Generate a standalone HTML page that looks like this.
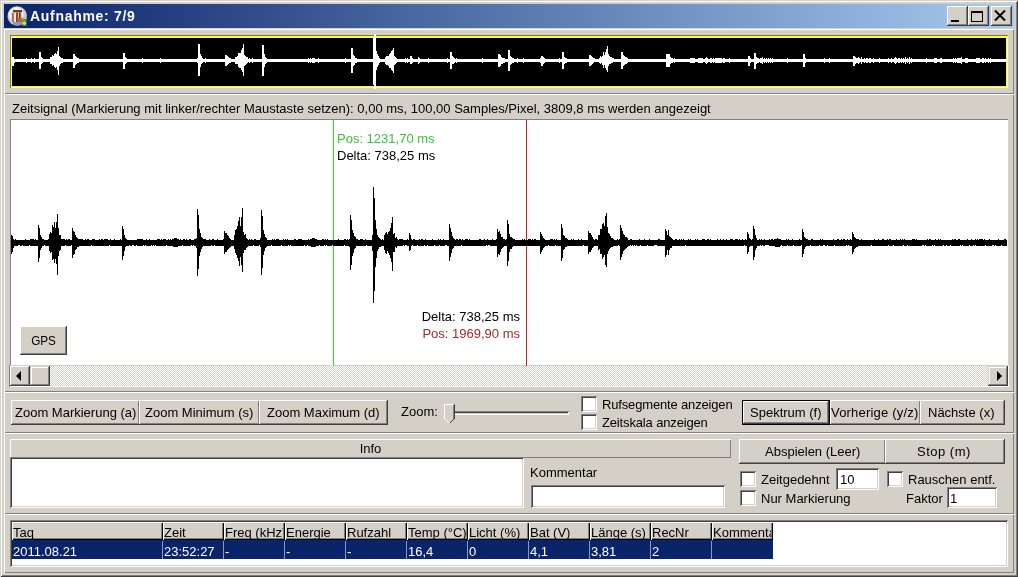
<!DOCTYPE html>
<html><head><meta charset="utf-8"><style>
html,body{margin:0;padding:0;width:1018px;height:577px;overflow:hidden;background:#D4D0C8;}
body>div,body>svg{position:absolute;box-sizing:border-box;}
.t{transform:translateZ(0);font-family:"Liberation Sans",sans-serif;font-size:13px;line-height:15px;white-space:pre;color:#000;}
</style></head><body>
<div style="left:0px;top:0px;width:1018px;height:577px;background:#D4D0C8;box-shadow:inset 1px 1px #D4D0C8,inset -1px -1px #404040,inset 2px 2px #fff,inset -2px -2px #808080;"></div>
<div style="left:4px;top:4px;width:1010px;height:24px;background:linear-gradient(to right,#0A246A,#A6CAF0);"></div>
<svg style="left:6px;top:5px" width="22" height="22" viewBox="0 0 22 22">

<circle cx="11.2" cy="11" r="9.9" fill="#c4ccdc"/><circle cx="10" cy="9.5" r="7.5" fill="#eef1f6"/>
<circle cx="11.2" cy="11" r="9.9" fill="none" stroke="#10204a" stroke-width="0.7" stroke-dasharray="1.2 1"/>
<rect x="5.5" y="7" width="10.5" height="12" fill="#d8c8b8"/>
<rect x="7" y="5" width="9" height="2.2" fill="#7a3a14"/>
<rect x="6" y="8" width="2.2" height="9" fill="#c07048"/>
<rect x="8.2" y="8" width="1.8" height="10" fill="#f8f4f0"/>
<rect x="10.2" y="7.5" width="1.6" height="10" fill="#6a3010"/>
<rect x="13" y="7.5" width="1.6" height="6" fill="#6a3010"/>
<rect x="11.5" y="13" width="5" height="4.5" fill="#d8583a"/>
<rect x="7" y="17" width="9" height="3" fill="#8a9ab8"/>
<rect x="16.3" y="12.5" width="4.2" height="8.3" fill="#4f9a3c"/>
<rect x="16.3" y="12.5" width="4.2" height="1.3" fill="#c8e0c0"/>
<circle cx="18.4" cy="18.3" r="1.7" fill="#e0e040"/>
</svg>
<div class="t" style="left:30px;top:8px;color:#fff;font-weight:bold;font-size:14px;line-height:17px;letter-spacing:0.7px;">Aufnahme: 7/9</div>
<div style="left:947px;top:6px;width:21px;height:20px;background:#D4D0C8;box-shadow:inset -1px -1px #404040,inset 1px 1px #fff,inset -2px -2px #808080;"></div>
<div style="left:968px;top:6px;width:21px;height:20px;background:#D4D0C8;box-shadow:inset -1px -1px #404040,inset 1px 1px #fff,inset -2px -2px #808080;"></div>
<div style="left:991px;top:6px;width:21px;height:20px;background:#D4D0C8;box-shadow:inset -1px -1px #404040,inset 1px 1px #fff,inset -2px -2px #808080;"></div>
<div style="left:951px;top:20px;width:8px;height:2px;background:#000;"></div>
<div style="left:971px;top:11px;width:12px;height:11px;box-shadow:inset 0 0 0 1px #000,inset 0 2px #000;"></div>
<svg style="left:994px;top:10px" width="12" height="11" viewBox="0 0 12 11"><path d="M1 0.5L11 10.5M11 0.5L1 10.5" stroke="#000" stroke-width="2" fill="none"/></svg>
<div style="left:4px;top:29px;width:1010px;height:65px;box-shadow:inset 1px 1px #fff,inset -1px -1px #808080;"></div>
<div style="left:4px;top:94px;width:1010px;height:298px;box-shadow:inset 1px 1px #fff,inset -1px -1px #808080;"></div>
<div style="left:4px;top:392px;width:1010px;height:41px;box-shadow:inset 1px 1px #fff,inset -1px -1px #808080;"></div>
<div style="left:4px;top:433px;width:1010px;height:81px;box-shadow:inset 1px 1px #fff,inset -1px -1px #808080;"></div>
<div style="left:4px;top:514px;width:1010px;height:59px;box-shadow:inset 1px 1px #fff,inset -1px -1px #808080;"></div>
<div style="left:10px;top:35px;width:998px;height:53px;background:#000;box-shadow:inset 1px 1px #7a7a3a,inset -1px -1px #ffffa8,inset 2px 2px #ffff40,inset -2px -2px #f0f060,inset 0 3px #ffff40;"></div>
<svg style="left:0;top:0" width="1018" height="100" shape-rendering="crispEdges"><path fill="#fff" d="M11 59h1V62h-1zM12 57h1V66h-1zM13 57h1V66h-1zM14 59h1V63h-1zM15 59h1V62h-1zM16 59h1V62h-1zM17 59h1V62h-1zM18 59h1V62h-1zM19 59h1V62h-1zM20 59h1V62h-1zM21 59h1V62h-1zM22 59h1V62h-1zM23 59h1V62h-1zM24 59h1V62h-1zM25 59h1V62h-1zM26 58h1V63h-1zM27 59h1V62h-1zM28 59h1V62h-1zM29 59h1V62h-1zM30 59h1V62h-1zM31 58h1V63h-1zM32 59h1V62h-1zM33 59h1V62h-1zM34 58h1V63h-1zM35 59h1V62h-1zM36 59h1V62h-1zM37 59h1V62h-1zM38 59h1V62h-1zM39 52h1V69h-1zM40 52h1V69h-1zM41 57h1V64h-1zM42 58h1V63h-1zM43 59h1V62h-1zM44 59h1V62h-1zM45 59h1V62h-1zM46 59h1V62h-1zM47 59h1V62h-1zM48 59h1V62h-1zM49 59h1V62h-1zM50 57h1V64h-1zM51 57h1V64h-1zM52 55h1V66h-1zM53 56h1V65h-1zM54 54h1V67h-1zM55 53h1V68h-1zM56 54h1V67h-1zM57 51h1V70h-1zM58 47h1V75h-1zM59 56h1V66h-1zM60 57h1V64h-1zM61 58h1V63h-1zM62 58h1V63h-1zM63 59h1V62h-1zM64 59h1V62h-1zM65 59h1V62h-1zM66 59h1V62h-1zM67 59h1V62h-1zM68 59h1V62h-1zM69 59h1V62h-1zM70 59h1V62h-1zM71 59h1V62h-1zM72 59h1V62h-1zM73 54h1V68h-1zM74 54h1V68h-1zM75 56h1V65h-1zM76 57h1V64h-1zM77 58h1V63h-1zM78 58h1V63h-1zM79 59h1V62h-1zM80 59h1V62h-1zM81 59h1V62h-1zM82 59h1V62h-1zM83 59h1V62h-1zM84 59h1V62h-1zM85 59h1V62h-1zM86 59h1V62h-1zM87 59h1V62h-1zM88 59h1V62h-1zM89 59h1V62h-1zM90 59h1V62h-1zM91 59h1V62h-1zM92 59h1V62h-1zM93 59h1V62h-1zM94 59h1V62h-1zM95 59h1V62h-1zM96 59h1V62h-1zM97 59h1V62h-1zM98 59h1V62h-1zM99 59h1V62h-1zM100 59h1V62h-1zM101 59h1V62h-1zM102 59h1V62h-1zM103 59h1V62h-1zM104 59h1V62h-1zM105 59h1V62h-1zM106 59h1V62h-1zM107 59h1V62h-1zM108 59h1V62h-1zM109 59h1V62h-1zM110 59h1V62h-1zM111 59h1V62h-1zM112 59h1V62h-1zM113 59h1V62h-1zM114 59h1V62h-1zM115 59h1V62h-1zM116 59h1V62h-1zM117 59h1V62h-1zM118 59h1V62h-1zM119 59h1V62h-1zM120 59h1V62h-1zM121 59h1V62h-1zM122 59h1V62h-1zM123 53h1V69h-1zM124 53h1V69h-1zM125 57h1V64h-1zM126 58h1V63h-1zM127 59h1V62h-1zM128 59h1V62h-1zM129 59h1V62h-1zM130 59h1V62h-1zM131 59h1V62h-1zM132 59h1V62h-1zM133 59h1V62h-1zM134 59h1V62h-1zM135 59h1V62h-1zM136 59h1V62h-1zM137 59h1V62h-1zM138 59h1V62h-1zM139 59h1V62h-1zM140 59h1V62h-1zM141 59h1V62h-1zM142 58h1V63h-1zM143 59h1V62h-1zM144 59h1V62h-1zM145 59h1V62h-1zM146 59h1V62h-1zM147 59h1V62h-1zM148 59h1V62h-1zM149 59h1V62h-1zM150 59h1V62h-1zM151 59h1V62h-1zM152 59h1V62h-1zM153 59h1V62h-1zM154 59h1V62h-1zM155 59h1V62h-1zM156 59h1V62h-1zM157 59h1V62h-1zM158 59h1V62h-1zM159 59h1V62h-1zM160 58h1V63h-1zM161 59h1V62h-1zM162 59h1V62h-1zM163 59h1V62h-1zM164 59h1V62h-1zM165 59h1V62h-1zM166 59h1V62h-1zM167 59h1V62h-1zM168 59h1V62h-1zM169 59h1V62h-1zM170 59h1V62h-1zM171 59h1V62h-1zM172 59h1V62h-1zM173 59h1V62h-1zM174 59h1V62h-1zM175 59h1V62h-1zM176 59h1V62h-1zM177 59h1V62h-1zM178 59h1V62h-1zM179 59h1V62h-1zM180 59h1V62h-1zM181 59h1V62h-1zM182 59h1V62h-1zM183 59h1V62h-1zM184 59h1V62h-1zM185 59h1V62h-1zM186 59h1V62h-1zM187 59h1V62h-1zM188 59h1V62h-1zM189 59h1V62h-1zM190 59h1V62h-1zM191 59h1V62h-1zM192 59h1V62h-1zM193 59h1V62h-1zM194 59h1V62h-1zM195 59h1V62h-1zM196 59h1V62h-1zM197 58h1V63h-1zM198 44h1V76h-1zM199 44h1V76h-1zM200 54h1V67h-1zM201 56h1V64h-1zM202 58h1V63h-1zM203 59h1V62h-1zM204 59h1V62h-1zM205 58h1V63h-1zM206 59h1V62h-1zM207 59h1V62h-1zM208 59h1V62h-1zM209 59h1V62h-1zM210 59h1V62h-1zM211 59h1V62h-1zM212 59h1V62h-1zM213 59h1V62h-1zM214 59h1V62h-1zM215 59h1V62h-1zM216 59h1V62h-1zM217 59h1V62h-1zM218 59h1V62h-1zM219 59h1V62h-1zM220 59h1V62h-1zM221 59h1V62h-1zM222 59h1V62h-1zM223 59h1V62h-1zM224 59h1V62h-1zM225 55h1V66h-1zM226 55h1V66h-1zM227 56h1V65h-1zM228 57h1V64h-1zM229 58h1V63h-1zM230 58h1V63h-1zM231 59h1V62h-1zM232 59h1V62h-1zM233 59h1V62h-1zM234 59h1V62h-1zM235 57h1V64h-1zM236 57h1V64h-1zM237 56h1V64h-1zM238 53h1V67h-1zM239 53h1V68h-1zM240 53h1V68h-1zM241 50h1V70h-1zM242 48h1V72h-1zM243 44h1V76h-1zM244 55h1V66h-1zM245 56h1V65h-1zM246 57h1V64h-1zM247 57h1V63h-1zM248 59h1V62h-1zM249 58h1V63h-1zM250 59h1V62h-1zM251 59h1V62h-1zM252 58h1V63h-1zM253 59h1V62h-1zM254 59h1V62h-1zM255 59h1V62h-1zM256 59h1V62h-1zM257 59h1V62h-1zM258 59h1V62h-1zM259 59h1V62h-1zM260 59h1V62h-1zM261 59h1V62h-1zM262 45h1V76h-1zM263 45h1V76h-1zM264 54h1V67h-1zM265 57h1V64h-1zM266 58h1V63h-1zM267 59h1V62h-1zM268 59h1V62h-1zM269 59h1V62h-1zM270 59h1V62h-1zM271 59h1V62h-1zM272 59h1V62h-1zM273 59h1V62h-1zM274 59h1V62h-1zM275 59h1V62h-1zM276 59h1V62h-1zM277 59h1V62h-1zM278 59h1V62h-1zM279 59h1V62h-1zM280 59h1V62h-1zM281 59h1V62h-1zM282 59h1V62h-1zM283 59h1V62h-1zM284 59h1V62h-1zM285 59h1V62h-1zM286 59h1V62h-1zM287 59h1V62h-1zM288 59h1V62h-1zM289 59h1V62h-1zM290 59h1V62h-1zM291 59h1V62h-1zM292 59h1V62h-1zM293 59h1V62h-1zM294 59h1V62h-1zM295 59h1V62h-1zM296 59h1V62h-1zM297 59h1V62h-1zM298 59h1V62h-1zM299 59h1V62h-1zM300 59h1V62h-1zM301 59h1V62h-1zM302 59h1V62h-1zM303 59h1V62h-1zM304 59h1V62h-1zM305 59h1V62h-1zM306 59h1V62h-1zM307 59h1V62h-1zM308 58h1V63h-1zM309 59h1V62h-1zM310 58h1V63h-1zM311 59h1V62h-1zM312 58h1V63h-1zM313 58h1V63h-1zM314 58h1V63h-1zM315 59h1V62h-1zM316 59h1V62h-1zM317 59h1V62h-1zM318 58h1V63h-1zM319 59h1V62h-1zM320 59h1V62h-1zM321 59h1V62h-1zM322 59h1V62h-1zM323 59h1V62h-1zM324 59h1V62h-1zM325 59h1V62h-1zM326 59h1V62h-1zM327 59h1V62h-1zM328 59h1V62h-1zM329 59h1V62h-1zM330 59h1V62h-1zM331 59h1V62h-1zM332 59h1V62h-1zM333 59h1V62h-1zM334 59h1V62h-1zM335 59h1V62h-1zM336 59h1V62h-1zM337 59h1V62h-1zM338 59h1V62h-1zM339 59h1V62h-1zM340 59h1V62h-1zM341 59h1V62h-1zM342 59h1V62h-1zM343 59h1V62h-1zM344 59h1V62h-1zM345 58h1V63h-1zM346 59h1V62h-1zM347 59h1V62h-1zM348 59h1V62h-1zM349 59h1V62h-1zM350 59h1V62h-1zM351 48h1V73h-1zM352 48h1V73h-1zM353 55h1V66h-1zM354 56h1V65h-1zM355 58h1V63h-1zM356 58h1V63h-1zM357 59h1V62h-1zM358 59h1V62h-1zM359 59h1V62h-1zM360 59h1V62h-1zM361 59h1V62h-1zM362 59h1V62h-1zM363 59h1V62h-1zM364 59h1V62h-1zM365 59h1V62h-1zM366 59h1V62h-1zM367 59h1V62h-1zM368 59h1V62h-1zM369 59h1V62h-1zM370 59h1V62h-1zM371 59h1V62h-1zM372 59h1V62h-1zM373 59h1V62h-1zM374 34h1V89h-1zM375 34h1V89h-1zM376 51h1V70h-1zM377 54h1V67h-1zM378 56h1V65h-1zM379 58h1V63h-1zM380 59h1V62h-1zM381 59h1V62h-1zM382 59h1V62h-1zM383 59h1V62h-1zM384 59h1V62h-1zM385 57h1V64h-1zM386 56h1V65h-1zM387 56h1V65h-1zM388 56h1V66h-1zM389 54h1V68h-1zM390 53h1V68h-1zM391 51h1V70h-1zM392 50h1V71h-1zM393 48h1V73h-1zM394 56h1V65h-1zM395 57h1V64h-1zM396 58h1V63h-1zM397 59h1V62h-1zM398 59h1V62h-1zM399 59h1V62h-1zM400 59h1V62h-1zM401 59h1V62h-1zM402 59h1V62h-1zM403 59h1V62h-1zM404 59h1V62h-1zM405 58h1V63h-1zM406 59h1V62h-1zM407 58h1V63h-1zM408 59h1V62h-1zM409 59h1V62h-1zM410 56h1V64h-1zM411 56h1V64h-1zM412 58h1V63h-1zM413 59h1V62h-1zM414 59h1V62h-1zM415 59h1V62h-1zM416 59h1V62h-1zM417 59h1V62h-1zM418 57h1V64h-1zM419 58h1V63h-1zM420 59h1V62h-1zM421 59h1V62h-1zM422 59h1V62h-1zM423 59h1V62h-1zM424 59h1V62h-1zM425 59h1V62h-1zM426 59h1V62h-1zM427 59h1V62h-1zM428 58h1V63h-1zM429 59h1V62h-1zM430 59h1V62h-1zM431 59h1V62h-1zM432 59h1V62h-1zM433 59h1V62h-1zM434 59h1V62h-1zM435 59h1V62h-1zM436 59h1V62h-1zM437 59h1V62h-1zM438 59h1V62h-1zM439 59h1V62h-1zM440 59h1V62h-1zM441 59h1V62h-1zM442 59h1V62h-1zM443 59h1V62h-1zM444 59h1V62h-1zM445 59h1V62h-1zM446 59h1V62h-1zM447 58h1V63h-1zM448 59h1V62h-1zM449 59h1V62h-1zM450 52h1V69h-1zM451 52h1V69h-1zM452 56h1V64h-1zM453 57h1V64h-1zM454 58h1V63h-1zM455 59h1V62h-1zM456 58h1V63h-1zM457 59h1V62h-1zM458 59h1V62h-1zM459 59h1V62h-1zM460 59h1V62h-1zM461 59h1V62h-1zM462 59h1V62h-1zM463 59h1V62h-1zM464 59h1V62h-1zM465 59h1V62h-1zM466 59h1V62h-1zM467 59h1V62h-1zM468 59h1V62h-1zM469 59h1V62h-1zM470 59h1V62h-1zM471 59h1V62h-1zM472 59h1V62h-1zM473 59h1V62h-1zM474 59h1V62h-1zM475 59h1V62h-1zM476 59h1V62h-1zM477 59h1V62h-1zM478 59h1V62h-1zM479 59h1V62h-1zM480 59h1V62h-1zM481 59h1V62h-1zM482 58h1V63h-1zM483 59h1V62h-1zM484 59h1V62h-1zM485 59h1V62h-1zM486 59h1V62h-1zM487 59h1V62h-1zM488 59h1V62h-1zM489 59h1V62h-1zM490 59h1V62h-1zM491 59h1V62h-1zM492 59h1V62h-1zM493 59h1V62h-1zM494 59h1V62h-1zM495 59h1V62h-1zM496 59h1V62h-1zM497 59h1V62h-1zM498 54h1V67h-1zM499 54h1V67h-1zM500 55h1V66h-1zM501 57h1V64h-1zM502 58h1V64h-1zM503 58h1V63h-1zM504 58h1V63h-1zM505 59h1V62h-1zM506 59h1V62h-1zM507 59h1V62h-1zM508 50h1V71h-1zM509 50h1V71h-1zM510 56h1V65h-1zM511 57h1V64h-1zM512 58h1V63h-1zM513 58h1V63h-1zM514 59h1V62h-1zM515 59h1V62h-1zM516 59h1V62h-1zM517 58h1V63h-1zM518 59h1V62h-1zM519 59h1V62h-1zM520 59h1V62h-1zM521 59h1V62h-1zM522 59h1V62h-1zM523 58h1V63h-1zM524 59h1V62h-1zM525 59h1V62h-1zM526 59h1V62h-1zM527 59h1V62h-1zM528 59h1V62h-1zM529 59h1V62h-1zM530 59h1V62h-1zM531 59h1V62h-1zM532 59h1V62h-1zM533 59h1V62h-1zM534 59h1V62h-1zM535 59h1V62h-1zM536 59h1V62h-1zM537 59h1V62h-1zM538 59h1V62h-1zM539 59h1V62h-1zM540 58h1V63h-1zM541 56h1V66h-1zM542 56h1V66h-1zM543 57h1V64h-1zM544 58h1V63h-1zM545 59h1V62h-1zM546 59h1V62h-1zM547 59h1V62h-1zM548 59h1V62h-1zM549 59h1V62h-1zM550 59h1V62h-1zM551 59h1V62h-1zM552 59h1V62h-1zM553 59h1V62h-1zM554 59h1V62h-1zM555 59h1V62h-1zM556 59h1V62h-1zM557 59h1V62h-1zM558 59h1V62h-1zM559 58h1V63h-1zM560 59h1V62h-1zM561 59h1V62h-1zM562 52h1V69h-1zM563 52h1V69h-1zM564 57h1V64h-1zM565 58h1V63h-1zM566 58h1V63h-1zM567 59h1V62h-1zM568 59h1V62h-1zM569 59h1V62h-1zM570 59h1V62h-1zM571 59h1V62h-1zM572 59h1V62h-1zM573 59h1V62h-1zM574 59h1V62h-1zM575 59h1V62h-1zM576 59h1V62h-1zM577 59h1V62h-1zM578 59h1V62h-1zM579 59h1V62h-1zM580 59h1V62h-1zM581 59h1V62h-1zM582 59h1V62h-1zM583 59h1V62h-1zM584 59h1V62h-1zM585 59h1V62h-1zM586 59h1V62h-1zM587 59h1V62h-1zM588 59h1V62h-1zM589 55h1V66h-1zM590 55h1V66h-1zM591 56h1V65h-1zM592 57h1V64h-1zM593 58h1V63h-1zM594 58h1V62h-1zM595 59h1V62h-1zM596 59h1V62h-1zM597 59h1V62h-1zM598 59h1V62h-1zM599 58h1V63h-1zM600 56h1V64h-1zM601 57h1V63h-1zM602 56h1V65h-1zM603 52h1V68h-1zM604 55h1V65h-1zM605 52h1V68h-1zM606 49h1V70h-1zM607 46h1V72h-1zM608 54h1V66h-1zM609 56h1V64h-1zM610 57h1V64h-1zM611 57h1V63h-1zM612 58h1V63h-1zM613 58h1V62h-1zM614 59h1V62h-1zM615 59h1V62h-1zM616 59h1V62h-1zM617 59h1V62h-1zM618 59h1V62h-1zM619 59h1V62h-1zM620 59h1V62h-1zM621 52h1V69h-1zM622 52h1V69h-1zM623 55h1V66h-1zM624 56h1V65h-1zM625 57h1V64h-1zM626 57h1V64h-1zM627 58h1V63h-1zM628 59h1V62h-1zM629 59h1V62h-1zM630 59h1V62h-1zM631 59h1V62h-1zM632 59h1V62h-1zM633 59h1V62h-1zM634 59h1V62h-1zM635 59h1V62h-1zM636 59h1V62h-1zM637 59h1V62h-1zM638 59h1V62h-1zM639 59h1V62h-1zM640 59h1V62h-1zM641 59h1V62h-1zM642 59h1V62h-1zM643 59h1V62h-1zM644 59h1V62h-1zM645 59h1V62h-1zM646 59h1V62h-1zM647 59h1V62h-1zM648 59h1V62h-1zM649 59h1V62h-1zM650 59h1V62h-1zM651 59h1V62h-1zM652 59h1V62h-1zM653 59h1V62h-1zM654 59h1V62h-1zM655 59h1V62h-1zM656 59h1V62h-1zM657 59h1V62h-1zM658 59h1V62h-1zM659 59h1V62h-1zM660 59h1V62h-1zM661 59h1V62h-1zM662 59h1V62h-1zM663 59h1V62h-1zM664 59h1V62h-1zM665 59h1V62h-1zM666 54h1V67h-1zM667 54h1V67h-1zM668 54h1V67h-1zM669 54h1V67h-1zM670 57h1V64h-1zM671 58h1V63h-1zM672 58h1V63h-1zM673 59h1V62h-1zM674 58h1V63h-1zM675 59h1V62h-1zM676 59h1V62h-1zM677 59h1V62h-1zM678 59h1V62h-1zM679 59h1V62h-1zM680 59h1V62h-1zM681 59h1V62h-1zM682 59h1V62h-1zM683 59h1V62h-1zM684 59h1V62h-1zM685 59h1V62h-1zM686 59h1V62h-1zM687 59h1V62h-1zM688 59h1V62h-1zM689 59h1V62h-1zM690 58h1V63h-1zM691 58h1V63h-1zM692 58h1V63h-1zM693 58h1V63h-1zM694 58h1V63h-1zM695 59h1V62h-1zM696 59h1V62h-1zM697 59h1V62h-1zM698 58h1V63h-1zM699 58h1V63h-1zM700 58h1V63h-1zM701 58h1V63h-1zM702 58h1V63h-1zM703 59h1V62h-1zM704 59h1V62h-1zM705 58h1V63h-1zM706 57h1V64h-1zM707 58h1V63h-1zM708 59h1V62h-1zM709 59h1V62h-1zM710 58h1V63h-1zM711 58h1V63h-1zM712 59h1V62h-1zM713 58h1V63h-1zM714 59h1V62h-1zM715 58h1V63h-1zM716 58h1V63h-1zM717 58h1V63h-1zM718 58h1V63h-1zM719 58h1V63h-1zM720 58h1V63h-1zM721 58h1V63h-1zM722 59h1V62h-1zM723 58h1V63h-1zM724 58h1V63h-1zM725 59h1V62h-1zM726 59h1V62h-1zM727 59h1V62h-1zM728 59h1V62h-1zM729 58h1V63h-1zM730 59h1V62h-1zM731 59h1V62h-1zM732 59h1V62h-1zM733 59h1V62h-1zM734 59h1V62h-1zM735 59h1V62h-1zM736 59h1V62h-1zM737 59h1V62h-1zM738 59h1V62h-1zM739 59h1V62h-1zM740 59h1V62h-1zM741 59h1V62h-1zM742 59h1V62h-1zM743 59h1V62h-1zM744 59h1V62h-1zM745 59h1V62h-1zM746 59h1V62h-1zM747 59h1V62h-1zM748 56h1V66h-1zM749 56h1V66h-1zM750 58h1V63h-1zM751 59h1V62h-1zM752 59h1V62h-1zM753 59h1V62h-1zM754 53h1V69h-1zM755 53h1V69h-1zM756 57h1V64h-1zM757 58h1V63h-1zM758 58h1V63h-1zM759 59h1V62h-1zM760 58h1V63h-1zM761 58h1V63h-1zM762 57h1V64h-1zM763 59h1V62h-1zM764 58h1V63h-1zM765 59h1V62h-1zM766 58h1V63h-1zM767 59h1V62h-1zM768 58h1V63h-1zM769 59h1V62h-1zM770 58h1V63h-1zM771 59h1V62h-1zM772 58h1V63h-1zM773 59h1V62h-1zM774 59h1V62h-1zM775 59h1V62h-1zM776 59h1V62h-1zM777 59h1V62h-1zM778 59h1V62h-1zM779 59h1V62h-1zM780 59h1V62h-1zM781 59h1V62h-1zM782 59h1V62h-1zM783 59h1V62h-1zM784 59h1V62h-1zM785 59h1V62h-1zM786 59h1V62h-1zM787 58h1V63h-1zM788 59h1V62h-1zM789 59h1V62h-1zM790 59h1V62h-1zM791 59h1V62h-1zM792 59h1V62h-1zM793 59h1V62h-1zM794 59h1V62h-1zM795 59h1V62h-1zM796 59h1V62h-1zM797 59h1V62h-1zM798 59h1V62h-1zM799 59h1V62h-1zM800 59h1V62h-1zM801 59h1V62h-1zM802 59h1V62h-1zM803 54h1V67h-1zM804 54h1V67h-1zM805 58h1V63h-1zM806 59h1V62h-1zM807 59h1V62h-1zM808 59h1V62h-1zM809 59h1V62h-1zM810 59h1V62h-1zM811 59h1V62h-1zM812 59h1V62h-1zM813 59h1V62h-1zM814 59h1V62h-1zM815 59h1V62h-1zM816 59h1V62h-1zM817 59h1V62h-1zM818 59h1V62h-1zM819 59h1V62h-1zM820 59h1V62h-1zM821 59h1V62h-1zM822 59h1V62h-1zM823 59h1V62h-1zM824 58h1V63h-1zM825 59h1V62h-1zM826 59h1V62h-1zM827 59h1V62h-1zM828 59h1V62h-1zM829 58h1V63h-1zM830 59h1V62h-1zM831 59h1V62h-1zM832 59h1V62h-1zM833 59h1V62h-1zM834 59h1V62h-1zM835 59h1V62h-1zM836 59h1V62h-1zM837 59h1V62h-1zM838 59h1V62h-1zM839 59h1V62h-1zM840 59h1V62h-1zM841 59h1V62h-1zM842 59h1V62h-1zM843 59h1V62h-1zM844 59h1V62h-1zM845 59h1V62h-1zM846 59h1V62h-1zM847 59h1V62h-1zM848 59h1V62h-1zM849 59h1V62h-1zM850 59h1V62h-1zM851 59h1V62h-1zM852 59h1V62h-1zM853 56h1V66h-1zM854 56h1V66h-1zM855 57h1V64h-1zM856 58h1V63h-1zM857 58h1V63h-1zM858 57h1V64h-1zM859 58h1V63h-1zM860 59h1V62h-1zM861 57h1V64h-1zM862 59h1V62h-1zM863 59h1V62h-1zM864 58h1V63h-1zM865 59h1V62h-1zM866 58h1V63h-1zM867 58h1V63h-1zM868 59h1V62h-1zM869 58h1V63h-1zM870 58h1V63h-1zM871 59h1V62h-1zM872 59h1V62h-1zM873 58h1V63h-1zM874 59h1V62h-1zM875 59h1V62h-1zM876 59h1V62h-1zM877 59h1V62h-1zM878 59h1V62h-1zM879 58h1V63h-1zM880 59h1V62h-1zM881 59h1V62h-1zM882 59h1V62h-1zM883 59h1V62h-1zM884 59h1V62h-1zM885 59h1V62h-1zM886 59h1V62h-1zM887 59h1V62h-1zM888 58h1V63h-1zM889 59h1V62h-1zM890 59h1V62h-1zM891 58h1V63h-1zM892 59h1V62h-1zM893 59h1V62h-1zM894 58h1V63h-1zM895 57h1V64h-1zM896 58h1V63h-1zM897 59h1V62h-1zM898 58h1V63h-1zM899 58h1V63h-1zM900 59h1V62h-1zM901 58h1V63h-1zM902 59h1V62h-1zM903 58h1V63h-1zM904 59h1V62h-1zM905 57h1V64h-1zM906 59h1V62h-1zM907 58h1V63h-1zM908 59h1V62h-1zM909 57h1V64h-1zM910 59h1V62h-1zM911 58h1V63h-1zM912 59h1V62h-1zM913 59h1V62h-1zM914 59h1V62h-1zM915 59h1V62h-1zM916 59h1V62h-1zM917 59h1V62h-1zM918 59h1V62h-1zM919 59h1V62h-1zM920 59h1V62h-1zM921 59h1V62h-1zM922 59h1V62h-1zM923 59h1V62h-1zM924 59h1V62h-1zM925 59h1V62h-1zM926 58h1V63h-1zM927 59h1V62h-1zM928 59h1V62h-1zM929 59h1V62h-1zM930 59h1V62h-1zM931 59h1V62h-1zM932 59h1V62h-1zM933 59h1V62h-1zM934 58h1V63h-1zM935 58h1V63h-1zM936 58h1V63h-1zM937 59h1V62h-1zM938 59h1V62h-1zM939 59h1V62h-1zM940 58h1V63h-1zM941 58h1V63h-1zM942 59h1V62h-1zM943 59h1V62h-1zM944 59h1V62h-1zM945 59h1V62h-1zM946 59h1V62h-1zM947 59h1V62h-1zM948 59h1V62h-1zM949 59h1V62h-1zM950 59h1V62h-1zM951 59h1V62h-1zM952 59h1V62h-1zM953 58h1V63h-1zM954 59h1V62h-1zM955 58h1V63h-1zM956 59h1V62h-1zM957 58h1V63h-1zM958 58h1V63h-1zM959 58h1V63h-1zM960 58h1V63h-1zM961 57h1V64h-1zM962 59h1V62h-1zM963 59h1V62h-1zM964 59h1V62h-1zM965 58h1V63h-1zM966 58h1V63h-1zM967 58h1V63h-1zM968 59h1V62h-1zM969 59h1V62h-1zM970 59h1V62h-1zM971 59h1V62h-1zM972 59h1V62h-1zM973 59h1V62h-1zM974 59h1V62h-1zM975 59h1V62h-1zM976 58h1V63h-1zM977 58h1V63h-1zM978 58h1V63h-1zM979 58h1V63h-1zM980 59h1V62h-1zM981 59h1V62h-1zM982 58h1V63h-1zM983 58h1V63h-1zM984 59h1V62h-1zM985 58h1V63h-1zM986 59h1V62h-1zM987 59h1V62h-1zM988 58h1V63h-1zM989 59h1V62h-1zM990 58h1V63h-1zM991 59h1V62h-1zM992 59h1V62h-1zM993 59h1V62h-1zM994 59h1V62h-1zM995 59h1V62h-1zM996 59h1V62h-1zM997 59h1V62h-1zM998 59h1V62h-1zM999 59h1V62h-1zM1000 59h1V62h-1zM1001 59h1V62h-1zM1002 59h1V62h-1zM1003 59h1V62h-1zM1004 59h1V62h-1zM1005 59h1V62h-1zM1006 59h1V62h-1z"/><rect x="373" y="38" width="3" height="47" fill="#fff"/></svg>
<div class="t" style="left:12px;top:101px;color:#000;">Zeitsignal (Markierung mit linker/rechter Maustaste setzen): 0,00 ms, 100,00 Samples/Pixel, 3809,8 ms werden angezeigt</div>
<div style="left:10px;top:119px;width:998px;height:247px;background:#fff;box-shadow:inset 1px 1px #808080,inset -1px 0 #fff;"></div>
<div style="left:9px;top:365px;width:1000px;height:22px;background:#D4D0C8;box-shadow:inset 1px 0 #808080,inset -1px -1px #fff;"></div>
<svg style="left:0;top:0" width="1018" height="400" shape-rendering="crispEdges"><rect x="331" y="120" width="1" height="246" fill="#F2FFF2"/><rect x="332" y="120" width="1" height="246" fill="#D4FFD4"/><rect x="333" y="120" width="1" height="246" fill="#5ABE5A"/><rect x="527" y="120" width="2" height="246" fill="#FFF2F2"/><rect x="526" y="120" width="1" height="246" fill="#993333"/><path fill="#000" d="M11 235h1V254h-1zM12 236h1V252h-1zM13 239h1V248h-1zM14 240h1V246h-1zM15 239h1V246h-1zM16 240h1V246h-1zM17 240h1V246h-1zM18 240h1V245h-1zM19 240h1V245h-1zM20 240h1V246h-1zM21 240h1V246h-1zM22 240h1V245h-1zM23 240h1V246h-1zM24 240h1V246h-1zM25 239h1V246h-1zM26 240h1V246h-1zM27 240h1V246h-1zM28 240h1V246h-1zM29 240h1V245h-1zM30 239h1V246h-1zM31 239h1V246h-1zM32 239h1V246h-1zM33 239h1V246h-1zM34 240h1V246h-1zM35 239h1V246h-1zM36 240h1V246h-1zM37 240h1V246h-1zM38 225h1V262h-1zM39 228h1V258h-1zM40 235h1V250h-1zM41 237h1V248h-1zM42 239h1V246h-1zM43 239h1V246h-1zM44 240h1V245h-1zM45 240h1V246h-1zM46 240h1V246h-1zM47 240h1V246h-1zM48 239h1V246h-1zM49 234h1V251h-1zM50 232h1V253h-1zM51 233h1V252h-1zM52 225h1V260h-1zM53 227h1V259h-1zM54 222h1V263h-1zM55 228h1V259h-1zM56 222h1V264h-1zM57 214h1V275h-1zM58 228h1V256h-1zM59 235h1V251h-1zM60 235h1V250h-1zM61 239h1V246h-1zM62 239h1V246h-1zM63 239h1V246h-1zM64 239h1V246h-1zM65 240h1V245h-1zM66 239h1V246h-1zM67 240h1V246h-1zM68 239h1V246h-1zM69 239h1V246h-1zM70 240h1V246h-1zM71 240h1V245h-1zM72 228h1V258h-1zM73 231h1V255h-1zM74 232h1V254h-1zM75 235h1V250h-1zM76 237h1V249h-1zM77 238h1V247h-1zM78 239h1V247h-1zM79 239h1V246h-1zM80 239h1V246h-1zM81 239h1V246h-1zM82 239h1V246h-1zM83 240h1V246h-1zM84 240h1V246h-1zM85 239h1V246h-1zM86 240h1V246h-1zM87 239h1V246h-1zM88 239h1V246h-1zM89 240h1V246h-1zM90 240h1V246h-1zM91 240h1V245h-1zM92 239h1V246h-1zM93 239h1V246h-1zM94 239h1V246h-1zM95 240h1V246h-1zM96 240h1V246h-1zM97 240h1V246h-1zM98 240h1V246h-1zM99 239h1V246h-1zM100 240h1V246h-1zM101 239h1V246h-1zM102 239h1V246h-1zM103 240h1V246h-1zM104 239h1V246h-1zM105 239h1V246h-1zM106 239h1V246h-1zM107 239h1V246h-1zM108 240h1V246h-1zM109 240h1V245h-1zM110 239h1V246h-1zM111 240h1V246h-1zM112 240h1V246h-1zM113 240h1V246h-1zM114 239h1V246h-1zM115 240h1V246h-1zM116 240h1V246h-1zM117 240h1V246h-1zM118 240h1V246h-1zM119 240h1V246h-1zM120 239h1V246h-1zM121 240h1V246h-1zM122 226h1V260h-1zM123 229h1V256h-1zM124 235h1V251h-1zM125 238h1V247h-1zM126 239h1V246h-1zM127 240h1V246h-1zM128 240h1V246h-1zM129 240h1V245h-1zM130 240h1V246h-1zM131 240h1V246h-1zM132 240h1V245h-1zM133 240h1V245h-1zM134 240h1V246h-1zM135 240h1V246h-1zM136 240h1V245h-1zM137 239h1V246h-1zM138 239h1V246h-1zM139 239h1V246h-1zM140 239h1V246h-1zM141 239h1V246h-1zM142 239h1V246h-1zM143 240h1V245h-1zM144 240h1V246h-1zM145 240h1V245h-1zM146 239h1V246h-1zM147 240h1V246h-1zM148 240h1V246h-1zM149 239h1V246h-1zM150 240h1V246h-1zM151 240h1V245h-1zM152 240h1V246h-1zM153 240h1V245h-1zM154 240h1V246h-1zM155 240h1V245h-1zM156 240h1V246h-1zM157 239h1V246h-1zM158 239h1V246h-1zM159 239h1V246h-1zM160 240h1V246h-1zM161 239h1V246h-1zM162 240h1V246h-1zM163 239h1V246h-1zM164 239h1V246h-1zM165 239h1V246h-1zM166 240h1V245h-1zM167 240h1V246h-1zM168 239h1V246h-1zM169 240h1V246h-1zM170 239h1V246h-1zM171 240h1V246h-1zM172 239h1V246h-1zM173 239h1V247h-1zM174 238h1V247h-1zM175 238h1V247h-1zM176 238h1V247h-1zM177 239h1V247h-1zM178 239h1V246h-1zM179 240h1V246h-1zM180 239h1V246h-1zM181 240h1V246h-1zM182 240h1V245h-1zM183 239h1V246h-1zM184 239h1V246h-1zM185 240h1V246h-1zM186 239h1V246h-1zM187 240h1V246h-1zM188 240h1V246h-1zM189 239h1V246h-1zM190 239h1V246h-1zM191 240h1V245h-1zM192 240h1V246h-1zM193 240h1V245h-1zM194 239h1V246h-1zM195 239h1V246h-1zM196 238h1V248h-1zM197 209h1V276h-1zM198 215h1V269h-1zM199 229h1V256h-1zM200 233h1V252h-1zM201 237h1V249h-1zM202 238h1V247h-1zM203 239h1V246h-1zM204 239h1V246h-1zM205 239h1V246h-1zM206 240h1V246h-1zM207 240h1V246h-1zM208 240h1V246h-1zM209 239h1V246h-1zM210 240h1V246h-1zM211 240h1V245h-1zM212 239h1V246h-1zM213 239h1V246h-1zM214 240h1V245h-1zM215 240h1V246h-1zM216 240h1V246h-1zM217 239h1V246h-1zM218 240h1V246h-1zM219 240h1V246h-1zM220 240h1V246h-1zM221 240h1V246h-1zM222 240h1V246h-1zM223 239h1V246h-1zM224 231h1V254h-1zM225 233h1V252h-1zM226 233h1V252h-1zM227 235h1V250h-1zM228 236h1V249h-1zM229 238h1V248h-1zM230 239h1V247h-1zM231 240h1V246h-1zM232 240h1V246h-1zM233 240h1V246h-1zM234 235h1V249h-1zM235 230h1V253h-1zM236 229h1V255h-1zM237 226h1V258h-1zM238 221h1V261h-1zM239 217h1V266h-1zM240 226h1V257h-1zM241 217h1V265h-1zM242 208h1V272h-1zM243 232h1V253h-1zM244 235h1V250h-1zM245 234h1V250h-1zM246 238h1V248h-1zM247 239h1V247h-1zM248 240h1V246h-1zM249 239h1V246h-1zM250 240h1V246h-1zM251 239h1V246h-1zM252 240h1V246h-1zM253 240h1V245h-1zM254 239h1V246h-1zM255 239h1V246h-1zM256 240h1V246h-1zM257 240h1V246h-1zM258 240h1V246h-1zM259 240h1V245h-1zM260 238h1V247h-1zM261 210h1V275h-1zM262 216h1V268h-1zM263 230h1V255h-1zM264 234h1V251h-1zM265 237h1V248h-1zM266 238h1V247h-1zM267 240h1V246h-1zM268 240h1V246h-1zM269 240h1V246h-1zM270 240h1V246h-1zM271 240h1V245h-1zM272 239h1V246h-1zM273 240h1V246h-1zM274 239h1V246h-1zM275 240h1V246h-1zM276 239h1V246h-1zM277 239h1V246h-1zM278 239h1V246h-1zM279 240h1V246h-1zM280 240h1V246h-1zM281 240h1V245h-1zM282 240h1V246h-1zM283 239h1V246h-1zM284 240h1V246h-1zM285 239h1V246h-1zM286 240h1V246h-1zM287 239h1V246h-1zM288 240h1V245h-1zM289 240h1V246h-1zM290 240h1V245h-1zM291 240h1V246h-1zM292 240h1V246h-1zM293 240h1V246h-1zM294 239h1V246h-1zM295 239h1V246h-1zM296 240h1V246h-1zM297 240h1V246h-1zM298 239h1V246h-1zM299 239h1V246h-1zM300 239h1V246h-1zM301 239h1V246h-1zM302 240h1V246h-1zM303 240h1V246h-1zM304 240h1V245h-1zM305 240h1V246h-1zM306 240h1V246h-1zM307 240h1V245h-1zM308 239h1V246h-1zM309 240h1V246h-1zM310 239h1V246h-1zM311 239h1V247h-1zM312 238h1V247h-1zM313 238h1V247h-1zM314 238h1V247h-1zM315 239h1V247h-1zM316 239h1V246h-1zM317 240h1V246h-1zM318 240h1V246h-1zM319 240h1V245h-1zM320 240h1V246h-1zM321 240h1V246h-1zM322 239h1V246h-1zM323 239h1V246h-1zM324 240h1V245h-1zM325 239h1V246h-1zM326 240h1V245h-1zM327 239h1V246h-1zM328 240h1V246h-1zM329 240h1V246h-1zM330 240h1V246h-1zM331 240h1V246h-1zM332 240h1V245h-1zM333 240h1V246h-1zM334 240h1V246h-1zM335 240h1V246h-1zM336 240h1V246h-1zM337 240h1V246h-1zM338 239h1V246h-1zM339 240h1V246h-1zM340 240h1V246h-1zM341 240h1V246h-1zM342 240h1V246h-1zM343 240h1V246h-1zM344 239h1V245h-1zM345 239h1V246h-1zM346 240h1V246h-1zM347 239h1V246h-1zM348 240h1V246h-1zM349 239h1V247h-1zM350 215h1V270h-1zM351 220h1V265h-1zM352 230h1V256h-1zM353 233h1V253h-1zM354 236h1V249h-1zM355 237h1V248h-1zM356 239h1V246h-1zM357 239h1V246h-1zM358 240h1V246h-1zM359 240h1V246h-1zM360 239h1V246h-1zM361 239h1V246h-1zM362 239h1V246h-1zM363 240h1V246h-1zM364 240h1V246h-1zM365 239h1V246h-1zM366 240h1V245h-1zM367 240h1V246h-1zM368 240h1V246h-1zM369 240h1V246h-1zM370 240h1V246h-1zM371 240h1V246h-1zM372 235h1V251h-1zM373 187h1V303h-1zM374 198h1V291h-1zM375 220h1V267h-1zM376 229h1V258h-1zM377 235h1V251h-1zM378 237h1V249h-1zM379 238h1V247h-1zM380 239h1V247h-1zM381 240h1V246h-1zM382 239h1V246h-1zM383 240h1V246h-1zM384 235h1V250h-1zM385 233h1V253h-1zM386 232h1V254h-1zM387 234h1V251h-1zM388 232h1V253h-1zM389 231h1V255h-1zM390 228h1V258h-1zM391 223h1V262h-1zM392 217h1V271h-1zM393 234h1V252h-1zM394 233h1V252h-1zM395 238h1V247h-1zM396 237h1V248h-1zM397 239h1V246h-1zM398 240h1V246h-1zM399 239h1V246h-1zM400 239h1V246h-1zM401 239h1V246h-1zM402 239h1V246h-1zM403 240h1V245h-1zM404 240h1V246h-1zM405 240h1V245h-1zM406 240h1V245h-1zM407 239h1V246h-1zM408 240h1V246h-1zM409 233h1V251h-1zM410 235h1V250h-1zM411 239h1V246h-1zM412 240h1V245h-1zM413 239h1V246h-1zM414 239h1V246h-1zM415 240h1V246h-1zM416 240h1V246h-1zM417 240h1V245h-1zM418 240h1V246h-1zM419 239h1V246h-1zM420 240h1V246h-1zM421 239h1V246h-1zM422 239h1V246h-1zM423 240h1V246h-1zM424 240h1V245h-1zM425 239h1V246h-1zM426 240h1V246h-1zM427 240h1V245h-1zM428 240h1V246h-1zM429 240h1V246h-1zM430 240h1V246h-1zM431 240h1V246h-1zM432 239h1V246h-1zM433 240h1V246h-1zM434 240h1V245h-1zM435 240h1V246h-1zM436 240h1V246h-1zM437 240h1V246h-1zM438 239h1V246h-1zM439 240h1V245h-1zM440 239h1V246h-1zM441 240h1V246h-1zM442 240h1V246h-1zM443 239h1V246h-1zM444 240h1V246h-1zM445 240h1V245h-1zM446 240h1V245h-1zM447 240h1V246h-1zM448 240h1V246h-1zM449 224h1V261h-1zM450 228h1V257h-1zM451 232h1V253h-1zM452 236h1V249h-1zM453 238h1V248h-1zM454 239h1V246h-1zM455 240h1V246h-1zM456 239h1V246h-1zM457 239h1V246h-1zM458 240h1V246h-1zM459 239h1V246h-1zM460 239h1V246h-1zM461 240h1V245h-1zM462 239h1V246h-1zM463 240h1V246h-1zM464 240h1V246h-1zM465 239h1V246h-1zM466 239h1V246h-1zM467 239h1V246h-1zM468 240h1V246h-1zM469 239h1V246h-1zM470 240h1V246h-1zM471 240h1V246h-1zM472 240h1V246h-1zM473 240h1V246h-1zM474 240h1V246h-1zM475 240h1V246h-1zM476 240h1V246h-1zM477 240h1V246h-1zM478 240h1V246h-1zM479 239h1V246h-1zM480 239h1V246h-1zM481 240h1V246h-1zM482 240h1V246h-1zM483 240h1V246h-1zM484 239h1V246h-1zM485 240h1V246h-1zM486 240h1V245h-1zM487 239h1V246h-1zM488 240h1V245h-1zM489 240h1V245h-1zM490 240h1V246h-1zM491 240h1V246h-1zM492 239h1V246h-1zM493 240h1V246h-1zM494 240h1V246h-1zM495 240h1V246h-1zM496 239h1V246h-1zM497 229h1V257h-1zM498 232h1V254h-1zM499 231h1V255h-1zM500 234h1V252h-1zM501 237h1V249h-1zM502 237h1V248h-1zM503 239h1V247h-1zM504 239h1V246h-1zM505 240h1V246h-1zM506 239h1V246h-1zM507 220h1V266h-1zM508 224h1V261h-1zM509 234h1V252h-1zM510 237h1V249h-1zM511 237h1V249h-1zM512 238h1V247h-1zM513 239h1V246h-1zM514 239h1V246h-1zM515 240h1V246h-1zM516 240h1V246h-1zM517 240h1V246h-1zM518 240h1V246h-1zM519 240h1V246h-1zM520 240h1V246h-1zM521 240h1V246h-1zM522 239h1V246h-1zM523 240h1V246h-1zM524 239h1V246h-1zM525 240h1V246h-1zM526 240h1V246h-1zM527 240h1V246h-1zM528 239h1V246h-1zM529 239h1V246h-1zM530 239h1V246h-1zM531 240h1V246h-1zM532 239h1V246h-1zM533 240h1V246h-1zM534 239h1V246h-1zM535 239h1V246h-1zM536 240h1V246h-1zM537 240h1V246h-1zM538 240h1V246h-1zM539 240h1V246h-1zM540 232h1V254h-1zM541 234h1V252h-1zM542 236h1V250h-1zM543 238h1V248h-1zM544 239h1V247h-1zM545 240h1V246h-1zM546 240h1V246h-1zM547 240h1V246h-1zM548 240h1V245h-1zM549 240h1V246h-1zM550 239h1V246h-1zM551 239h1V246h-1zM552 239h1V246h-1zM553 240h1V246h-1zM554 239h1V246h-1zM555 240h1V245h-1zM556 239h1V246h-1zM557 240h1V246h-1zM558 240h1V246h-1zM559 240h1V246h-1zM560 240h1V246h-1zM561 224h1V261h-1zM562 228h1V258h-1zM563 235h1V250h-1zM564 236h1V249h-1zM565 238h1V247h-1zM566 238h1V247h-1zM567 239h1V246h-1zM568 240h1V246h-1zM569 240h1V246h-1zM570 240h1V246h-1zM571 239h1V246h-1zM572 240h1V246h-1zM573 239h1V246h-1zM574 240h1V246h-1zM575 240h1V246h-1zM576 240h1V246h-1zM577 240h1V246h-1zM578 239h1V246h-1zM579 240h1V246h-1zM580 240h1V246h-1zM581 239h1V246h-1zM582 240h1V246h-1zM583 240h1V245h-1zM584 240h1V246h-1zM585 240h1V246h-1zM586 240h1V246h-1zM587 240h1V246h-1zM588 231h1V254h-1zM589 233h1V252h-1zM590 233h1V252h-1zM591 235h1V250h-1zM592 237h1V248h-1zM593 239h1V247h-1zM594 240h1V246h-1zM595 239h1V246h-1zM596 239h1V246h-1zM597 240h1V246h-1zM598 235h1V250h-1zM599 235h1V249h-1zM600 229h1V254h-1zM601 229h1V254h-1zM602 224h1V259h-1zM603 223h1V257h-1zM604 226h1V255h-1zM605 216h1V265h-1zM606 213h1V267h-1zM607 227h1V254h-1zM608 233h1V251h-1zM609 234h1V249h-1zM610 236h1V248h-1zM611 238h1V247h-1zM612 238h1V247h-1zM613 239h1V246h-1zM614 240h1V246h-1zM615 240h1V246h-1zM616 240h1V246h-1zM617 239h1V246h-1zM618 240h1V245h-1zM619 239h1V246h-1zM620 225h1V260h-1zM621 228h1V257h-1zM622 231h1V254h-1zM623 234h1V251h-1zM624 235h1V250h-1zM625 237h1V249h-1zM626 237h1V248h-1zM627 238h1V247h-1zM628 240h1V246h-1zM629 240h1V246h-1zM630 239h1V245h-1zM631 239h1V246h-1zM632 240h1V245h-1zM633 240h1V246h-1zM634 240h1V245h-1zM635 240h1V246h-1zM636 240h1V245h-1zM637 240h1V246h-1zM638 240h1V246h-1zM639 239h1V246h-1zM640 240h1V245h-1zM641 240h1V246h-1zM642 240h1V246h-1zM643 240h1V246h-1zM644 239h1V246h-1zM645 240h1V246h-1zM646 240h1V246h-1zM647 240h1V245h-1zM648 240h1V246h-1zM649 239h1V246h-1zM650 240h1V246h-1zM651 240h1V246h-1zM652 240h1V246h-1zM653 240h1V246h-1zM654 240h1V245h-1zM655 240h1V245h-1zM656 240h1V245h-1zM657 240h1V246h-1zM658 239h1V246h-1zM659 239h1V246h-1zM660 240h1V246h-1zM661 240h1V246h-1zM662 240h1V246h-1zM663 240h1V246h-1zM664 240h1V246h-1zM665 229h1V257h-1zM666 231h1V255h-1zM667 235h1V250h-1zM668 230h1V255h-1zM669 236h1V250h-1zM670 237h1V248h-1zM671 238h1V248h-1zM672 239h1V246h-1zM673 240h1V246h-1zM674 240h1V246h-1zM675 239h1V246h-1zM676 239h1V246h-1zM677 240h1V246h-1zM678 240h1V246h-1zM679 239h1V246h-1zM680 240h1V246h-1zM681 239h1V246h-1zM682 240h1V246h-1zM683 239h1V246h-1zM684 240h1V246h-1zM685 240h1V245h-1zM686 240h1V246h-1zM687 240h1V246h-1zM688 239h1V246h-1zM689 240h1V246h-1zM690 239h1V246h-1zM691 240h1V246h-1zM692 240h1V246h-1zM693 240h1V246h-1zM694 240h1V246h-1zM695 239h1V246h-1zM696 240h1V246h-1zM697 239h1V246h-1zM698 240h1V246h-1zM699 240h1V246h-1zM700 240h1V246h-1zM701 240h1V246h-1zM702 239h1V246h-1zM703 239h1V246h-1zM704 239h1V246h-1zM705 240h1V246h-1zM706 240h1V246h-1zM707 239h1V246h-1zM708 239h1V246h-1zM709 240h1V246h-1zM710 239h1V246h-1zM711 240h1V246h-1zM712 240h1V246h-1zM713 240h1V246h-1zM714 240h1V246h-1zM715 240h1V246h-1zM716 240h1V246h-1zM717 239h1V246h-1zM718 240h1V246h-1zM719 240h1V246h-1zM720 239h1V246h-1zM721 240h1V246h-1zM722 240h1V246h-1zM723 239h1V246h-1zM724 240h1V246h-1zM725 240h1V246h-1zM726 239h1V246h-1zM727 240h1V246h-1zM728 240h1V246h-1zM729 240h1V246h-1zM730 239h1V246h-1zM731 239h1V246h-1zM732 239h1V246h-1zM733 240h1V246h-1zM734 240h1V246h-1zM735 239h1V246h-1zM736 239h1V246h-1zM737 239h1V246h-1zM738 240h1V246h-1zM739 239h1V246h-1zM740 240h1V246h-1zM741 240h1V246h-1zM742 239h1V246h-1zM743 240h1V246h-1zM744 240h1V245h-1zM745 239h1V246h-1zM746 240h1V246h-1zM747 232h1V254h-1zM748 234h1V252h-1zM749 238h1V247h-1zM750 239h1V246h-1zM751 240h1V246h-1zM752 239h1V246h-1zM753 226h1V260h-1zM754 229h1V257h-1zM755 235h1V250h-1zM756 238h1V248h-1zM757 240h1V246h-1zM758 240h1V246h-1zM759 239h1V246h-1zM760 240h1V245h-1zM761 239h1V246h-1zM762 240h1V245h-1zM763 240h1V246h-1zM764 239h1V246h-1zM765 240h1V245h-1zM766 240h1V245h-1zM767 240h1V245h-1zM768 240h1V245h-1zM769 239h1V246h-1zM770 240h1V246h-1zM771 239h1V246h-1zM772 239h1V246h-1zM773 240h1V246h-1zM774 239h1V246h-1zM775 239h1V247h-1zM776 239h1V247h-1zM777 238h1V247h-1zM778 239h1V247h-1zM779 239h1V247h-1zM780 239h1V246h-1zM781 240h1V245h-1zM782 240h1V246h-1zM783 240h1V246h-1zM784 240h1V246h-1zM785 240h1V246h-1zM786 239h1V246h-1zM787 240h1V245h-1zM788 239h1V246h-1zM789 240h1V246h-1zM790 240h1V246h-1zM791 240h1V246h-1zM792 239h1V246h-1zM793 240h1V245h-1zM794 240h1V246h-1zM795 240h1V246h-1zM796 240h1V246h-1zM797 240h1V246h-1zM798 240h1V246h-1zM799 239h1V246h-1zM800 240h1V246h-1zM801 240h1V245h-1zM802 229h1V257h-1zM803 232h1V254h-1zM804 237h1V249h-1zM805 238h1V247h-1zM806 239h1V246h-1zM807 239h1V246h-1zM808 240h1V246h-1zM809 240h1V246h-1zM810 240h1V245h-1zM811 239h1V246h-1zM812 239h1V246h-1zM813 240h1V246h-1zM814 240h1V246h-1zM815 240h1V246h-1zM816 240h1V246h-1zM817 240h1V246h-1zM818 240h1V246h-1zM819 240h1V245h-1zM820 239h1V246h-1zM821 240h1V246h-1zM822 239h1V246h-1zM823 240h1V245h-1zM824 240h1V245h-1zM825 240h1V246h-1zM826 240h1V246h-1zM827 240h1V245h-1zM828 240h1V246h-1zM829 240h1V246h-1zM830 240h1V246h-1zM831 240h1V246h-1zM832 240h1V246h-1zM833 239h1V246h-1zM834 240h1V245h-1zM835 240h1V246h-1zM836 240h1V246h-1zM837 239h1V246h-1zM838 239h1V246h-1zM839 240h1V246h-1zM840 240h1V246h-1zM841 239h1V246h-1zM842 240h1V246h-1zM843 239h1V246h-1zM844 239h1V246h-1zM845 240h1V246h-1zM846 240h1V245h-1zM847 239h1V246h-1zM848 240h1V245h-1zM849 240h1V246h-1zM850 239h1V246h-1zM851 240h1V246h-1zM852 232h1V254h-1zM853 234h1V252h-1zM854 237h1V249h-1zM855 238h1V248h-1zM856 239h1V247h-1zM857 239h1V247h-1zM858 239h1V246h-1zM859 240h1V246h-1zM860 240h1V246h-1zM861 239h1V246h-1zM862 240h1V246h-1zM863 240h1V246h-1zM864 240h1V246h-1zM865 240h1V246h-1zM866 240h1V246h-1zM867 240h1V246h-1zM868 240h1V246h-1zM869 240h1V246h-1zM870 240h1V246h-1zM871 240h1V245h-1zM872 240h1V246h-1zM873 240h1V246h-1zM874 239h1V246h-1zM875 240h1V246h-1zM876 240h1V246h-1zM877 240h1V246h-1zM878 239h1V246h-1zM879 240h1V246h-1zM880 240h1V246h-1zM881 240h1V246h-1zM882 239h1V246h-1zM883 239h1V246h-1zM884 240h1V246h-1zM885 240h1V246h-1zM886 240h1V246h-1zM887 239h1V246h-1zM888 240h1V245h-1zM889 239h1V246h-1zM890 239h1V246h-1zM891 240h1V246h-1zM892 240h1V246h-1zM893 240h1V245h-1zM894 240h1V246h-1zM895 240h1V246h-1zM896 239h1V246h-1zM897 240h1V246h-1zM898 240h1V246h-1zM899 240h1V246h-1zM900 239h1V246h-1zM901 240h1V246h-1zM902 239h1V246h-1zM903 240h1V245h-1zM904 239h1V246h-1zM905 240h1V246h-1zM906 240h1V246h-1zM907 240h1V245h-1zM908 240h1V246h-1zM909 240h1V246h-1zM910 240h1V246h-1zM911 240h1V246h-1zM912 239h1V246h-1zM913 239h1V246h-1zM914 239h1V246h-1zM915 240h1V246h-1zM916 239h1V246h-1zM917 240h1V246h-1zM918 240h1V246h-1zM919 240h1V246h-1zM920 240h1V246h-1zM921 240h1V246h-1zM922 240h1V245h-1zM923 240h1V245h-1zM924 240h1V246h-1zM925 240h1V245h-1zM926 240h1V246h-1zM927 239h1V246h-1zM928 240h1V246h-1zM929 239h1V246h-1zM930 239h1V246h-1zM931 240h1V246h-1zM932 240h1V245h-1zM933 240h1V246h-1zM934 240h1V245h-1zM935 239h1V246h-1zM936 240h1V246h-1zM937 240h1V246h-1zM938 239h1V246h-1zM939 240h1V246h-1zM940 239h1V246h-1zM941 240h1V246h-1zM942 240h1V246h-1zM943 240h1V245h-1zM944 240h1V246h-1zM945 240h1V246h-1zM946 240h1V245h-1zM947 240h1V246h-1zM948 240h1V246h-1zM949 240h1V246h-1zM950 240h1V245h-1zM951 240h1V246h-1zM952 239h1V246h-1zM953 240h1V246h-1zM954 239h1V246h-1zM955 239h1V246h-1zM956 240h1V246h-1zM957 240h1V246h-1zM958 239h1V246h-1zM959 239h1V246h-1zM960 240h1V245h-1zM961 240h1V246h-1zM962 240h1V245h-1zM963 240h1V246h-1zM964 240h1V246h-1zM965 240h1V246h-1zM966 240h1V246h-1zM967 239h1V246h-1zM968 240h1V246h-1zM969 240h1V245h-1zM970 240h1V246h-1zM971 239h1V246h-1zM972 240h1V246h-1zM973 240h1V245h-1zM974 240h1V246h-1zM975 239h1V245h-1zM976 240h1V246h-1zM977 239h1V246h-1zM978 240h1V246h-1zM979 239h1V246h-1zM980 239h1V246h-1zM981 239h1V246h-1zM982 239h1V246h-1zM983 240h1V246h-1zM984 239h1V246h-1zM985 240h1V245h-1zM986 240h1V246h-1zM987 240h1V246h-1zM988 240h1V246h-1zM989 239h1V246h-1zM990 240h1V246h-1zM991 240h1V246h-1zM992 240h1V245h-1zM993 240h1V245h-1zM994 240h1V246h-1zM995 240h1V245h-1zM996 240h1V246h-1zM997 240h1V246h-1zM998 239h1V246h-1zM999 240h1V246h-1zM1000 240h1V246h-1zM1001 240h1V245h-1zM1002 240h1V246h-1zM1003 240h1V246h-1zM1004 239h1V246h-1zM1005 239h1V246h-1zM1006 240h1V246h-1z"/></svg>
<div class="t" style="left:337px;top:131px;color:#3CC03C;">Pos: 1231,70 ms</div>
<div class="t" style="left:337px;top:148px;color:#000;">Delta: 738,25 ms</div>
<div class="t" style="left:400px;top:309px;width:120px;text-align:right;">Delta: 738,25 ms</div>
<div class="t" style="left:400px;top:326px;width:120px;text-align:right;color:#A82828">Pos: 1969,90 ms</div>
<div style="left:20px;top:326px;width:47px;height:29px;background:#D4D0C8;box-shadow:inset -1px -1px #404040,inset 1px 1px #fff,inset -2px -2px #808080;"></div>
<div class="t" style="left:20px;top:333px;width:47px;text-align:center;color:#000;transform:translateZ(0) scaleX(0.9);">GPS</div>
<div style="left:10px;top:366px;width:998px;height:20px;background:repeating-conic-gradient(#D4D0C8 0 25%,#fff 0 50%) 0 0/2px 2px;"></div>
<div style="left:10px;top:366px;width:20px;height:20px;background:#D4D0C8;box-shadow:inset -1px -1px #404040,inset 1px 1px #fff,inset -2px -2px #808080;box-shadow:inset -1px -1px #404040,inset 1px 1px #fff,inset -2px -2px #808080;"></div>
<div style="left:30px;top:366px;width:20px;height:20px;background:#D4D0C8;box-shadow:inset -1px -1px #404040,inset 1px 1px #fff,inset -2px -2px #808080;box-shadow:inset -1px -1px #404040,inset 1px 1px #D4D0C8,inset -2px -2px #808080,inset 2px 2px #fff;"></div>
<div style="left:988px;top:366px;width:20px;height:20px;background:#D4D0C8;box-shadow:inset -1px -1px #404040,inset 1px 1px #fff,inset -2px -2px #808080;box-shadow:inset -1px -1px #404040,inset 1px 1px #D4D0C8,inset -2px -2px #808080,inset 2px 2px #fff;"></div>
<svg style="left:10px;top:366px" width="20" height="20"><path d="M16 5v10h1V5z" fill="none"/><path d="M11 5L6 10L11 15z" fill="#000"/></svg>
<svg style="left:988px;top:366px" width="20" height="20"><path d="M9 5L14 10L9 15z" fill="#000"/></svg>
<div style="left:11px;top:400px;width:129px;height:25px;background:#D4D0C8;box-shadow:inset -1px -1px #404040,inset 1px 1px #fff,inset -2px -2px #808080;"></div>
<div class="t" style="left:15px;top:405px;color:#000;">Zoom Markierung (a)</div>
<div style="left:139px;top:400px;width:121px;height:25px;background:#D4D0C8;box-shadow:inset -1px -1px #404040,inset 1px 1px #fff,inset -2px -2px #808080;"></div>
<div class="t" style="left:145px;top:405px;color:#000;">Zoom Minimum (s)</div>
<div style="left:259px;top:400px;width:129px;height:25px;background:#D4D0C8;box-shadow:inset -1px -1px #404040,inset 1px 1px #fff,inset -2px -2px #808080;"></div>
<div class="t" style="left:267px;top:405px;color:#000;">Zoom Maximum (d)</div>
<div class="t" style="left:401px;top:404px;color:#000;">Zoom:</div>
<div style="left:449px;top:411px;width:120px;height:4px;box-shadow:inset 1px 1px #808080,inset -1px -1px #fff,inset 2px 2px #404040,inset -2px -2px #D4D0C8;"></div>
<svg style="left:443px;top:403px" width="14" height="22" shape-rendering="crispEdges"><path d="M1 1h10v14l-5 5l-5-5z" fill="#D4D0C8"/><path d="M1 15V1h10" stroke="#fff" fill="none" transform="translate(0.5,0.5)"/><path d="M1 15l5 5" stroke="#fff" fill="none" transform="translate(0.5,0.5)"/><path d="M11 0v15l-5 5" stroke="#404040" fill="none" stroke-width="1" transform="translate(0.5,0.5)"/><path d="M10 1v14" stroke="#808080" fill="none" transform="translate(0.5,0.5)"/></svg>
<div style="left:581px;top:396px;width:16px;height:16px;background:#fff;box-shadow:inset 1px 1px #808080,inset -1px -1px #fff,inset 2px 2px #404040,inset -2px -2px #D4D0C8;"></div>
<div style="left:581px;top:414px;width:16px;height:16px;background:#fff;box-shadow:inset 1px 1px #808080,inset -1px -1px #fff,inset 2px 2px #404040,inset -2px -2px #D4D0C8;"></div>
<div class="t" style="left:602px;top:397px;color:#000;letter-spacing:-0.16px;">Rufsegmente anzeigen</div>
<div class="t" style="left:602px;top:415px;color:#000;letter-spacing:-0.15px;">Zeitskala anzeigen</div>
<div style="left:742px;top:400px;width:88px;height:25px;background:#D4D0C8;box-shadow:inset 0 0 0 1px #000,inset -2px -2px #404040,inset 2px 2px #fff,inset -3px -3px #808080;"></div>
<div class="t" style="left:750px;top:405px;color:#000;">Spektrum (f)</div>
<div style="left:830px;top:400px;width:91px;height:25px;background:#D4D0C8;box-shadow:inset -1px -1px #404040,inset 1px 1px #fff,inset -2px -2px #808080;"></div>
<div class="t" style="left:831px;top:405px;color:#000;"><span style="letter-spacing:0.2px">Vorherige (y/z)</span></div>
<div style="left:920px;top:400px;width:85px;height:25px;background:#D4D0C8;box-shadow:inset -1px -1px #404040,inset 1px 1px #fff,inset -2px -2px #808080;"></div>
<div class="t" style="left:928px;top:405px;color:#000;">Nächste (x)</div>
<div style="left:10px;top:439px;width:721px;height:19px;background:#D4D0C8;box-shadow:inset 1px 1px #fff,inset -1px -1px #808080;"></div>
<div class="t" style="left:10px;top:441px;width:721px;text-align:center;color:#000;">Info</div>
<div style="left:10px;top:457px;width:514px;height:51px;background:#fff;box-shadow:inset 1px 1px #808080,inset -1px -1px #fff,inset 2px 2px #404040,inset -2px -2px #D4D0C8;"></div>
<div class="t" style="left:530px;top:465px;color:#000;">Kommentar</div>
<div style="left:531px;top:485px;width:194px;height:23px;background:#fff;box-shadow:inset 1px 1px #808080,inset -1px -1px #fff,inset 2px 2px #404040,inset -2px -2px #D4D0C8;"></div>
<div style="left:739px;top:439px;width:147px;height:25px;background:#D4D0C8;box-shadow:inset -1px -1px #404040,inset 1px 1px #fff,inset -2px -2px #808080;"></div>
<div class="t" style="left:765px;top:444px;color:#000;">Abspielen (Leer)</div>
<div style="left:885px;top:439px;width:120px;height:25px;background:#D4D0C8;box-shadow:inset -1px -1px #404040,inset 1px 1px #fff,inset -2px -2px #808080;"></div>
<div class="t" style="left:917px;top:444px;color:#000;"><span style="letter-spacing:0.5px">Stop (m)</span></div>
<div style="left:740px;top:471px;width:16px;height:16px;background:#fff;box-shadow:inset 1px 1px #808080,inset -1px -1px #fff,inset 2px 2px #404040,inset -2px -2px #D4D0C8;"></div>
<div style="left:740px;top:490px;width:16px;height:16px;background:#fff;box-shadow:inset 1px 1px #808080,inset -1px -1px #fff,inset 2px 2px #404040,inset -2px -2px #D4D0C8;"></div>
<div class="t" style="left:761px;top:472px;color:#000;">Zeitgedehnt</div>
<div class="t" style="left:761px;top:491px;color:#000;">Nur Markierung</div>
<div style="left:836px;top:468px;width:43px;height:22px;background:#fff;box-shadow:inset 1px 1px #808080,inset -1px -1px #fff,inset 2px 2px #404040,inset -2px -2px #D4D0C8;"></div>
<div class="t" style="left:840px;top:472px;color:#000;">10</div>
<div style="left:887px;top:471px;width:16px;height:16px;background:#fff;box-shadow:inset 1px 1px #808080,inset -1px -1px #fff,inset 2px 2px #404040,inset -2px -2px #D4D0C8;"></div>
<div class="t" style="left:908px;top:472px;color:#000;">Rauschen entf.</div>
<div class="t" style="left:906px;top:491px;color:#000;">Faktor</div>
<div style="left:947px;top:487px;width:50px;height:21px;background:#fff;box-shadow:inset 1px 1px #808080,inset -1px -1px #fff,inset 2px 2px #404040,inset -2px -2px #D4D0C8;"></div>
<div class="t" style="left:950px;top:491px;color:#000;">1</div>
<div style="left:10px;top:520px;width:998px;height:47px;background:#fff;box-shadow:inset 1px 1px #808080,inset -1px -1px #fff,inset 2px 2px #404040,inset -2px -2px #D4D0C8;"></div>
<div style="left:12px;top:522px;width:151px;height:18px;background:#D4D0C8;box-shadow:inset 1px 1px #fff,inset -1px -1px #000,inset -2px -2px #808080;overflow:hidden;"></div>
<div class="t" style="left:13px;top:525px;width:148px;height:14px;overflow:hidden;">Taq</div>
<div style="left:163px;top:522px;width:61px;height:18px;background:#D4D0C8;box-shadow:inset 1px 1px #fff,inset -1px -1px #000,inset -2px -2px #808080;overflow:hidden;"></div>
<div class="t" style="left:164px;top:525px;width:58px;height:14px;overflow:hidden;">Zeit</div>
<div style="left:224px;top:522px;width:61px;height:18px;background:#D4D0C8;box-shadow:inset 1px 1px #fff,inset -1px -1px #000,inset -2px -2px #808080;overflow:hidden;"></div>
<div class="t" style="left:225px;top:525px;width:58px;height:14px;overflow:hidden;">Freq (kHz)</div>
<div style="left:285px;top:522px;width:61px;height:18px;background:#D4D0C8;box-shadow:inset 1px 1px #fff,inset -1px -1px #000,inset -2px -2px #808080;overflow:hidden;"></div>
<div class="t" style="left:286px;top:525px;width:58px;height:14px;overflow:hidden;">Energie</div>
<div style="left:346px;top:522px;width:61px;height:18px;background:#D4D0C8;box-shadow:inset 1px 1px #fff,inset -1px -1px #000,inset -2px -2px #808080;overflow:hidden;"></div>
<div class="t" style="left:347px;top:525px;width:58px;height:14px;overflow:hidden;">Rufzahl</div>
<div style="left:407px;top:522px;width:61px;height:18px;background:#D4D0C8;box-shadow:inset 1px 1px #fff,inset -1px -1px #000,inset -2px -2px #808080;overflow:hidden;"></div>
<div class="t" style="left:408px;top:525px;width:58px;height:14px;overflow:hidden;">Temp (°C)</div>
<div style="left:468px;top:522px;width:61px;height:18px;background:#D4D0C8;box-shadow:inset 1px 1px #fff,inset -1px -1px #000,inset -2px -2px #808080;overflow:hidden;"></div>
<div class="t" style="left:469px;top:525px;width:58px;height:14px;overflow:hidden;">Licht (%)</div>
<div style="left:529px;top:522px;width:61px;height:18px;background:#D4D0C8;box-shadow:inset 1px 1px #fff,inset -1px -1px #000,inset -2px -2px #808080;overflow:hidden;"></div>
<div class="t" style="left:530px;top:525px;width:58px;height:14px;overflow:hidden;">Bat (V)</div>
<div style="left:590px;top:522px;width:61px;height:18px;background:#D4D0C8;box-shadow:inset 1px 1px #fff,inset -1px -1px #000,inset -2px -2px #808080;overflow:hidden;"></div>
<div class="t" style="left:591px;top:525px;width:58px;height:14px;overflow:hidden;">Länge (s)</div>
<div style="left:651px;top:522px;width:61px;height:18px;background:#D4D0C8;box-shadow:inset 1px 1px #fff,inset -1px -1px #000,inset -2px -2px #808080;overflow:hidden;"></div>
<div class="t" style="left:652px;top:525px;width:58px;height:14px;overflow:hidden;">RecNr</div>
<div style="left:712px;top:522px;width:61px;height:18px;background:#D4D0C8;box-shadow:inset 1px 1px #fff,inset -1px -1px #000,inset -2px -2px #808080;overflow:hidden;"></div>
<div class="t" style="left:713px;top:525px;width:58px;height:14px;overflow:hidden;">Kommentar</div>
<div style="left:12px;top:540px;width:761px;height:19px;background:#0A246A;"></div>
<div style="left:162px;top:541px;width:1px;height:18px;background:#8898c8;"></div>
<div style="left:223px;top:541px;width:1px;height:18px;background:#8898c8;"></div>
<div style="left:284px;top:541px;width:1px;height:18px;background:#8898c8;"></div>
<div style="left:345px;top:541px;width:1px;height:18px;background:#8898c8;"></div>
<div style="left:406px;top:541px;width:1px;height:18px;background:#8898c8;"></div>
<div style="left:467px;top:541px;width:1px;height:18px;background:#8898c8;"></div>
<div style="left:528px;top:541px;width:1px;height:18px;background:#8898c8;"></div>
<div style="left:589px;top:541px;width:1px;height:18px;background:#8898c8;"></div>
<div style="left:650px;top:541px;width:1px;height:18px;background:#8898c8;"></div>
<div style="left:711px;top:541px;width:1px;height:18px;background:#8898c8;"></div>
<div class="t" style="left:13px;top:544px;width:148px;overflow:hidden;color:#fff">2011.08.21</div>
<div class="t" style="left:164px;top:544px;width:58px;overflow:hidden;color:#fff">23:52:27</div>
<div class="t" style="left:225px;top:544px;width:58px;overflow:hidden;color:#fff">-</div>
<div class="t" style="left:286px;top:544px;width:58px;overflow:hidden;color:#fff">-</div>
<div class="t" style="left:347px;top:544px;width:58px;overflow:hidden;color:#fff">-</div>
<div class="t" style="left:408px;top:544px;width:58px;overflow:hidden;color:#fff">16,4</div>
<div class="t" style="left:469px;top:544px;width:58px;overflow:hidden;color:#fff">0</div>
<div class="t" style="left:530px;top:544px;width:58px;overflow:hidden;color:#fff">4,1</div>
<div class="t" style="left:591px;top:544px;width:58px;overflow:hidden;color:#fff">3,81</div>
<div class="t" style="left:652px;top:544px;width:58px;overflow:hidden;color:#fff">2</div>
</body></html>
